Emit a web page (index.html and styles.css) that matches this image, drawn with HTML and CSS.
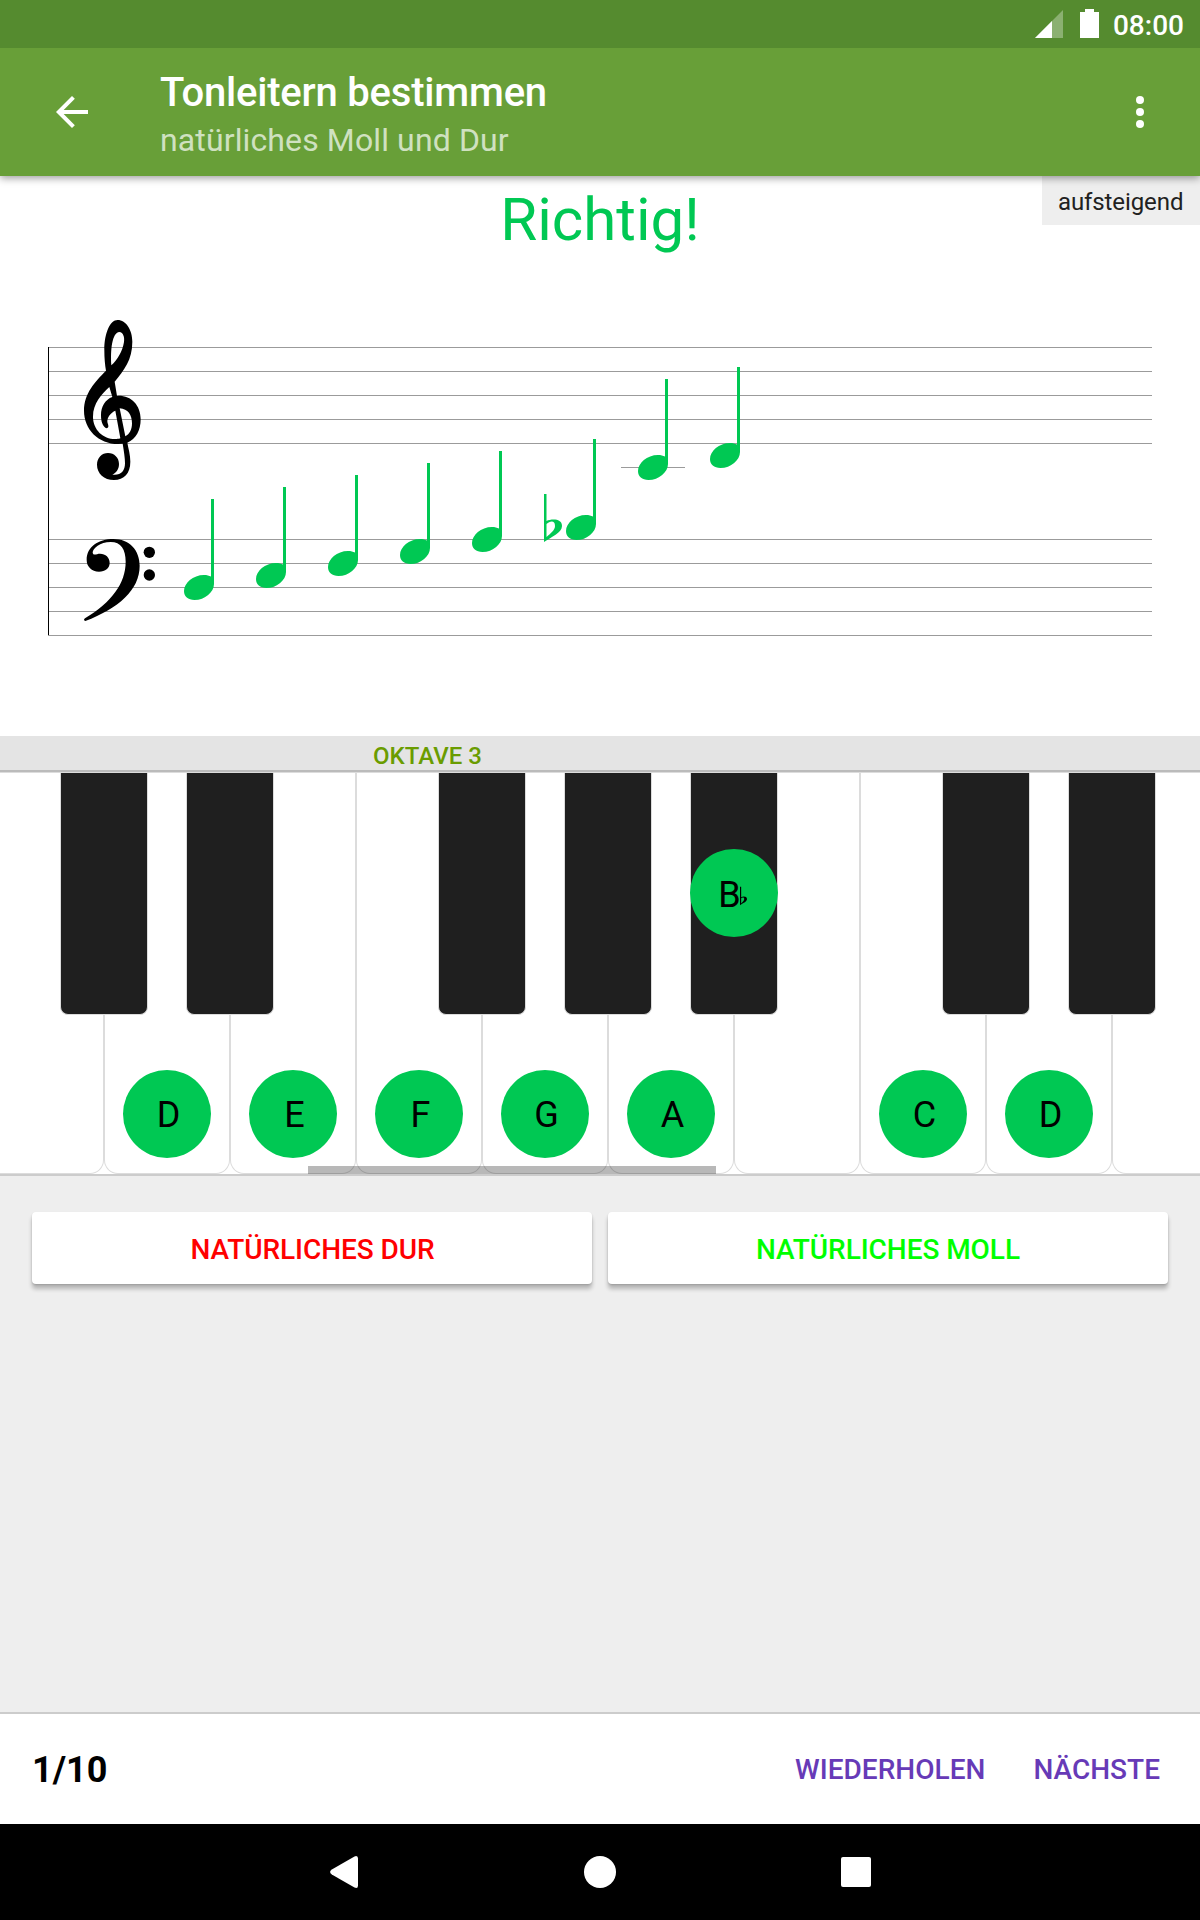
FILE: index.html
```html
<!DOCTYPE html>
<html lang="de">
<head>
<meta charset="utf-8">
<title>Tonleitern bestimmen</title>
<link rel="stylesheet" href="styles.css">
</head>
<body>
<div class="screen">
  <div class="status-bar">
    <svg class="signal" width="28" height="28" viewBox="0 0 28 28"><path d="M28 0V28H0Z" fill="#fff" opacity=".32"/><path d="M17 11V28H0Z" fill="#fff"/></svg>
    <svg class="battery" width="19" height="29" viewBox="0 0 19 29"><path d="M5 0h9v3h5v26H0V3h5z" fill="#fff"/></svg>
    <span class="clock">08:00</span>
  </div>
  <header class="app-bar">
    <svg class="back" width="48" height="48" viewBox="0 0 24 24"><path d="M20 11H7.83l5.59-5.59L12 4l-8 8 8 8 1.41-1.41L7.83 13H20v-2z" fill="#fff"/></svg>
    <div class="titles">
      <h1 class="title">Tonleitern bestimmen</h1>
      <p class="subtitle">natürliches Moll und Dur</p>
    </div>
    <svg class="more" width="48" height="48" viewBox="0 0 24 24" fill="#fff"><circle cx="12" cy="6" r="2"/><circle cx="12" cy="12" r="2"/><circle cx="12" cy="18" r="2"/></svg>
  </header>

  <section class="score">
    <span class="direction">aufsteigend</span>
    <h2 class="result">Richtig!</h2>
    <svg class="staff" width="1200" height="336" viewBox="0 310 1200 336">
      <defs>
        <g id="note"><path d="M0 16C0 8 9 0 20 0C23 0 25 .6 27 1.6V-76H30V9C30 17 21 25 10.500 25C4 25 0 21.500 0 16Z"/></g>
      </defs>
      <g fill="#9b9b9b">
        <path d="M48 347h1104v1H48zM48 371h1104v1H48zM48 395h1104v1H48zM48 419h1104v1H48zM48 443h1104v1H48z"/>
        <path d="M48 539h1104v1H48zM48 563h1104v1H48zM48 587h1104v1H48zM48 611h1104v1H48zM48 635h1104v1H48z"/>
        <path d="M621 467h64v1h-64z"/>
      </g>
      <path d="M48 347h1v288h-1z"/>
      <g transform="translate(40 300) scale(.33333)">
        <path fill-rule="evenodd" d="M233 60C210 60 193 100 193 150C193 175 195 195 198 212C165 245 132 280 132 332C132 388 175 432 235 432L248 431C252 455 255 475 255 490C255 514 242 527 217 524C228 519 237 508 237 492C237 473 223 459 204 459C186 459 171 473 171 494C171 520 192 540 222 540C252 540 271 520 271 485C271 465 265 445 262 428C288 418 302 390 302 358C302 315 274 287 236 287L231 288L224 245C252 210 277 180 277 125C277 90 258 60 233 60ZM238 96C250 97 254 112 252 126C248 153 232 180 214 196C211 150 216 98 238 96ZM208 261C185 282 159 310 159 350C159 390 190 417 225 417C231 417 236 417 241 415L226 332C212 338 202 352 202 364C202 370 206 375 205 380C204 384 200 386 196 383C188 377 183 365 183 345C183 320 196 298 217 291ZM239 325L256 409C269 403 276 388 276 370C276 345 264 327 239 325Z"/>
        <path d="M140 780C140 740 175 717 220 717C268 717 299 750 299 797C299 870 235 925 136 963C131 963 131 957 135 955C215 906 257 850 257 785C257 748 243 726 212 726C180 726 158 745 158 758C160 768 170 761 180 761C197 761 209 773 209 788C209 804 196 815 177 815C155 815 140 800 140 780Z"/>
        <circle cx="328" cy="757" r="17"/><circle cx="328" cy="825" r="17"/>
      </g>
      <g fill="#00c853">
        <use href="#note" x="184" y="575"/><use href="#note" x="256" y="563"/><use href="#note" x="328" y="551"/><use href="#note" x="400" y="539"/>
        <use href="#note" x="472" y="527"/><use href="#note" x="566" y="515"/><use href="#note" x="638" y="455"/><use href="#note" x="710" y="443"/>
        <path fill-rule="evenodd" d="M544 494H546.500V521C551 519 562 518 562 526C562 533 551 537 544 542ZM546.500 524V537C551 533 555 530 555 526C555 520 550 521 546.500 524Z"/>
      </g>
    </svg>
  </section>

  <section class="piano">
    <div class="octave-bar"><span class="octave">OKTAVE 3</span></div>
    <div class="keys">
      <div class="white"></div>
      <div class="white"><span class="marker">D</span></div>
      <div class="white"><span class="marker">E</span></div>
      <div class="white"><span class="marker">F</span></div>
      <div class="white"><span class="marker">G</span></div>
      <div class="white"><span class="marker">A</span></div>
      <div class="white"></div>
      <div class="white"><span class="marker">C</span></div>
      <div class="white"><span class="marker">D</span></div>
      <div class="white"></div>
      <div class="blacks">
        <div class="black"></div>
        <div class="black"></div>
        <div class="black gap"></div>
        <div class="black"></div>
        <div class="black"><span class="marker flat">B<svg width="7" height="20" viewBox="0 0 18 48"><path fill-rule="evenodd" d="M0 0H3V27C8 24 18 24 18 32C18 39 7 43 0 48ZM3 30V43C7 39 11 36 11 32C11 26 6 27 3 30Z"/></svg></span></div>
        <div class="black gap"></div>
        <div class="black"></div>
      </div>
      <div class="scrollbar"></div>
    </div>
  </section>

  <main class="answers">
    <button class="answer wrong">NATÜRLICHES DUR</button>
    <button class="answer right">NATÜRLICHES MOLL</button>
  </main>

  <footer class="footer">
    <span class="progress">1/10</span>
    <button class="action">WIEDERHOLEN</button>
    <button class="action">NÄCHSTE</button>
  </footer>

  <nav class="nav-bar">
    <svg width="32" height="32" viewBox="0 0 32 32"><path d="M26.500 .4Q30 -1 30 2.500V29.500Q30 33 26.500 31.600L3.800 18.600Q.4 16 3.800 13.400Z" fill="#fff"/></svg>
    <svg width="32" height="32" viewBox="0 0 32 32"><circle cx="16" cy="16" r="16" fill="#fff"/></svg>
    <svg width="32" height="32" viewBox="0 0 32 32"><rect x="1" y="1" width="30" height="30" rx="2" fill="#fff"/></svg>
  </nav>
</div>
</body>
</html>
```
FILE: styles.css
```css
* { box-sizing: border-box; }
body { margin: 0; font-family: Roboto, sans-serif; }
h1, h2, p { margin: 0; }
button { border: 0; padding: 0; font: 500 28px/36px Roboto, sans-serif; letter-spacing: -.06px; }
svg { display: block; flex: none; }

.screen { width: 1200px; height: 1920px; display: flex; flex-direction: column; background: #eee; }

.status-bar { position: relative; z-index: 2; height: 48px; background: #558b2f; display: flex; justify-content: flex-end; align-items: flex-start; padding-right: 16px; color: #fff; }
.signal { margin: 10px 17px 0 0; }
.battery { margin: 9px 14px 0 0; }
.clock { font-size: 28px; line-height: 32px; font-weight: 500; margin-top: 10px; }

.app-bar { position: relative; z-index: 1; height: 128px; flex: none; background: #689f38; display: flex; align-items: center; padding: 0 36px 0 48px; box-shadow: 0 2px 8px rgba(0, 0, 0, .4); }
.titles { flex: 1; margin-left: 64px; padding-top: 8px; }
.title { color: #fff; font-size: 40px; line-height: 48px; font-weight: 500; letter-spacing: -.2px; }
.subtitle { color: rgba(255, 255, 255, .7); font-size: 32px; line-height: 46px; letter-spacing: .12px; }

.score { position: relative; height: 560px; flex: none; background: #fff; }
.direction { position: absolute; top: 0; right: 0; width: 158px; height: 49px; padding-left: 16px; background: #eee; color: #212121; font-size: 24px; line-height: 53px; letter-spacing: -.1px; }
.result { color: #00c853; font-size: 60px; line-height: 88px; font-weight: 400; text-align: center; }
.staff { margin-top: 46px; }

.piano { flex: none; }
.octave-bar { height: 37px; background: #e4e4e4; border-bottom: 1px solid #dcdcdc; box-shadow: inset 0 -2px #bbb; padding-left: 373px; }
.octave { display: block; color: #6a9c00; font-size: 24px; line-height: 40px; font-weight: 500; }
.keys { position: relative; height: 403px; padding-bottom: 2px; background: #fff; border-bottom: 2px solid #ccc; overflow: hidden; display: flex; }
.white { flex: none; width: 126px; height: 401px; border: 1px solid #dcdcdc; border-top: 0; border-radius: 0 0 14px 14px; display: flex; justify-content: center; align-items: flex-end; padding-bottom: 15px; }
.white:first-child { margin-left: -22px; }
.marker { display: flex; justify-content: center; align-items: center; width: 88px; height: 88px; flex: none; border-radius: 50%; background: #00c853; color: #000; font-size: 36px; line-height: 42px; padding: 1px 0 0 3px; }
.blacks { position: absolute; top: 0; left: 60px; display: flex; gap: 38px; }
.black { width: 88px; height: 242px; background: #1f1f1f; border: 1px solid #dcdcdc; border-top: 0; border-radius: 0 0 8px 8px; display: flex; align-items: center; justify-content: center; }
.gap { margin-left: 126px; }
.flat { padding: 3px 3px 0 0; margin-bottom: 1px; }
.flat svg { margin-top: 2px; margin-left: -1px; }
.scrollbar { position: absolute; left: 308px; bottom: 0; width: 408px; height: 8px; background: rgba(0, 0, 0, .28); }

.answers { flex: 1; display: flex; align-items: flex-start; gap: 16px; padding: 36px 32px 0; }
.answer { flex: 1; height: 72px; background: #fff; border-radius: 4px; box-shadow: 0 5px 4px rgba(0, 0, 0, .24), 0 1px 2px rgba(0, 0, 0, .14); padding-top: 4px; }
.wrong { color: #f00; text-indent: 1px; }
.right { color: #0f0; }

.footer { height: 112px; flex: none; background: #fff; border-top: 2px solid #ccc; display: flex; align-items: center; gap: 48px; padding: 1px 40px 0 32px; }
.progress { flex: 1; font-size: 36px; font-weight: 700; color: #000; }
.action { background: none; color: #673ab7; letter-spacing: .02px; }

.nav-bar { height: 96px; flex: none; background: #000; display: flex; justify-content: center; align-items: center; gap: 224px; }
```
